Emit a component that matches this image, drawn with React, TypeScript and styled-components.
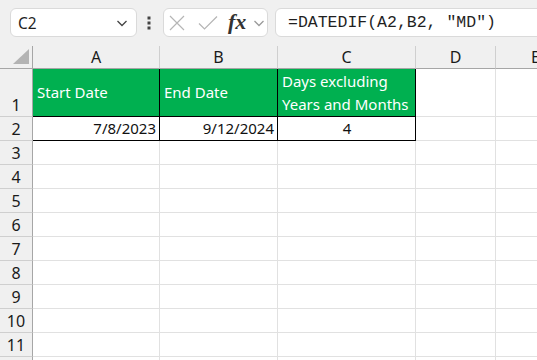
import * as React from "react";
import styled, {createGlobalStyle} from "styled-components";

const GlobalStyle = createGlobalStyle`
    html, body {
        margin: 0;
        padding: 0;
        background: #ffffff;
        overflow: hidden;
    }
`;

const Page = styled.div`
    width: 537px;
    height: 360px;
    overflow: hidden;
    font-family: "Noto Sans", "Open Sans", sans-serif;
    background: #ffffff;
`;

const Toolbar = styled.div`
    display: flex;
    align-items: flex-start;
    height: 46px;
    box-sizing: border-box;
    padding: 8px 0 0 10px;
    background: #f0f0f0;
    overflow: hidden;

    & > * {
        flex-shrink: 0;
    }
`;

const Box = styled.div`
    height: 29px;
    box-sizing: border-box;
    background: #ffffff;
    border: 1px solid #dadada;
    border-radius: 6px;
    display: flex;
    align-items: center;
`;

const NameBox = styled(Box)`
    width: 127px;
    padding: 0 8px 0 7px;
    justify-content: space-between;
    font-size: 15.5px;
    color: #1f1f1f;
`;

const Dots = styled.div`
    width: 4px;
    height: 29px;
    margin: 0 12px 0 10px;
    display: flex;
    align-items: center;
`;

const FormulaButtons = styled(Box)`
    width: 105px;
    padding: 0 0 0 5px;

    & > * {
        flex-shrink: 0;
    }
`;

const IconSlot = styled.span<{$gap: number}>`
    display: flex;
    align-items: center;
    margin-right: ${p => p.$gap}px;
`;

const Fx = styled.span`
    font-family: "Liberation Serif", "DejaVu Serif", serif;
    font-style: italic;
    font-weight: bold;
    font-size: 22px;
    color: #333333;
    line-height: 1;
    width: 19px;
    margin-right: 6px;
    margin-top: -2px;
`;

const FormulaInput = styled(Box)`
    width: 290px;
    margin-left: 7px;
    padding-left: 12px;
    font-family: "Liberation Mono", "DejaVu Sans Mono", monospace;
    font-size: 16.5px;
    color: #1f1f1f;
    white-space: pre;
`;

const Sheet = styled.div`
    display: grid;
    grid-template-columns: 33px 127px 118px 138px 80px 80px;
    grid-template-rows: 23px 48px repeat(12, 24px);
`;

const Corner = styled.div`
    background: #f0f0f0;
    box-sizing: border-box;
    border-right: 1px solid #a6a6a6;
    border-bottom: 1px solid #a6a6a6;
    display: flex;
    align-items: flex-end;
    justify-content: flex-end;
    padding: 0 3px 4px 0;
`;

const ColHeader = styled.div`
    background: #f0f0f0;
    box-sizing: border-box;
    border-right: 1px solid #cfcfcf;
    border-bottom: 1px solid #a6a6a6;
    display: flex;
    align-items: center;
    justify-content: center;
    font-size: 16px;
    color: #1a1a1a;
`;

const RowHeader = styled.div`
    background: #f0f0f0;
    box-sizing: border-box;
    border-right: 1px solid #a6a6a6;
    border-bottom: 1px solid #cfcfcf;
    display: flex;
    align-items: flex-end;
    justify-content: center;
    padding-bottom: 0;
    font-size: 16px;
    line-height: 21px;
    color: #1a1a1a;
`;

const Cell = styled.div<{$fill?: string; $align?: string; $framed?: boolean; $light?: boolean}>`
    box-sizing: border-box;
    background: ${p => p.$fill || "#ffffff"};
    border-right: 1px solid ${p => (p.$framed ? "#000000" : "#e1e1e1")};
    border-bottom: 1px solid ${p => (p.$framed ? "#000000" : "#e1e1e1")};
    display: flex;
    align-items: center;
    justify-content: ${p => p.$align || "flex-start"};
    padding: 0 3px 0 4px;
    font-size: 15px;
    line-height: 23px;
    color: ${p => (p.$light ? "#ffffff" : "#111111")};
    overflow: hidden;
`;

const Chevron = ({size = 12, color = "#444"}: {size?: number; color?: string}) => (
    <svg width={size} height={size} viewBox="0 0 12 12">
        <path d="M1.5 4 L6 8.5 L10.5 4" fill="none" stroke={color} strokeWidth="1.3" />
    </svg>
);

const columns = ["A", "B", "C", "D", "E"];
const GREEN = "#00b050";

export const App = () => {
    const emptyRows = [3, 4, 5, 6, 7, 8, 9, 10, 11];

    return (
        <Page>
            <GlobalStyle />
            <Toolbar>
                <NameBox>
                    <span>C2</span>
                    <Chevron />
                </NameBox>
                <Dots>
                    <svg width="4" height="14" viewBox="0 0 4 14">
                        <rect x="0.5" y="0.5" width="3" height="3" fill="#444" />
                        <rect x="0.5" y="5.5" width="3" height="3" fill="#444" />
                        <rect x="0.5" y="10.5" width="3" height="3" fill="#444" />
                    </svg>
                </Dots>
                <FormulaButtons>
                    <IconSlot $gap={13}>
                        <svg width="16" height="16" viewBox="0 0 16 16">
                            <path d="M1 1 L15 15 M15 1 L1 15" stroke="#b5b5b5" strokeWidth="1.2" />
                        </svg>
                    </IconSlot>
                    <IconSlot $gap={10}>
                        <svg width="20" height="16" viewBox="0 0 20 16">
                            <path d="M1 8.5 L6.5 14 L19 1.5" fill="none" stroke="#b5b5b5" strokeWidth="1.2" />
                        </svg>
                    </IconSlot>
                    <Fx>fx</Fx>
                    <Chevron size={12} color="#9a9a9a" />
                </FormulaButtons>
                <FormulaInput>=DATEDIF(A2,B2, "MD")</FormulaInput>
            </Toolbar>
            <Sheet>
                <Corner>
                    <svg width="16" height="15" viewBox="0 0 16 15">
                        <polygon points="16,0 16,15 0,15" fill="#b3b3b3" />
                    </svg>
                </Corner>
                {columns.map(c => (
                    <ColHeader key={c}>{c}</ColHeader>
                ))}

                <RowHeader>1</RowHeader>
                <Cell $fill={GREEN} $framed $light>Start Date</Cell>
                <Cell $fill={GREEN} $framed $light>End Date</Cell>
                <Cell $fill={GREEN} $framed $light>
                    Days excluding
                    <br />
                    Years and Months
                </Cell>
                <Cell />
                <Cell />

                <RowHeader>2</RowHeader>
                <Cell $framed $align="flex-end">7/8/2023</Cell>
                <Cell $framed $align="flex-end">9/12/2024</Cell>
                <Cell $framed $align="center">4</Cell>
                <Cell />
                <Cell />

                {emptyRows.map(r => (
                    <React.Fragment key={r}>
                        <RowHeader>{r}</RowHeader>
                        {columns.map(c => (
                            <Cell key={c} />
                        ))}
                    </React.Fragment>
                ))}
                <RowHeader />
                {columns.map(c => (
                    <Cell key={c} />
                ))}
            </Sheet>
        </Page>
    );
};

export default App;
